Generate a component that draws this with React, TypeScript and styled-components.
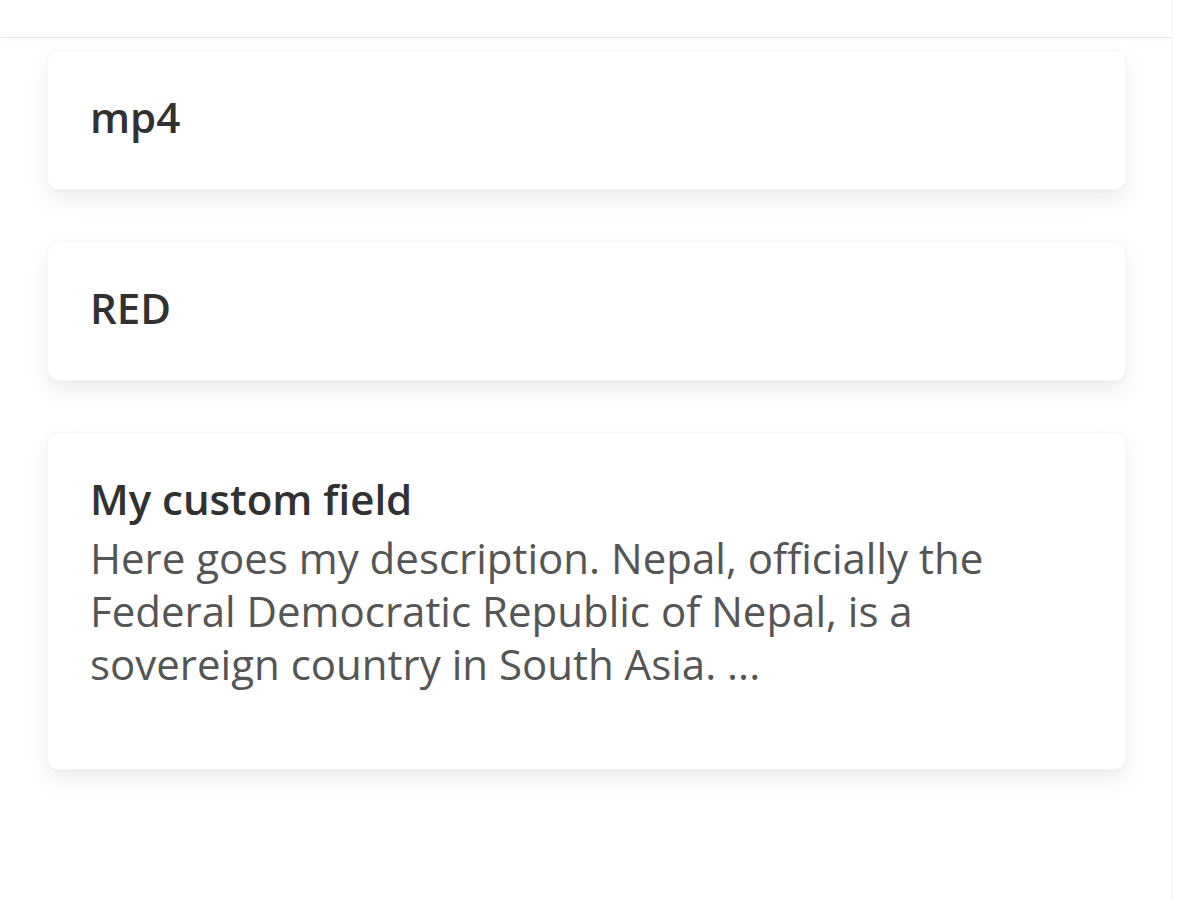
import React from "react";
import styled, { createGlobalStyle } from "styled-components";

const Global = createGlobalStyle`
  html, body { margin: 0; padding: 0; background: #ffffff; }
  body { font-family: "Open Sans", "Noto Sans", sans-serif; }
`;

const Page = styled.div`
  width: 1172px;
  min-height: 900px;
  box-sizing: border-box;
  padding-top: 37px;
  border-right: 1px solid #f5f5f5;
`;

const TopRule = styled.div`
  height: 1px;
  background: #e6e6e6;
  box-shadow: 0 2px 6px rgba(0, 0, 0, 0.05);
`;

const List = styled.div`
  display: flex;
  flex-direction: column;
  gap: 51px;
  padding: 12px 0 0 47px;
  width: 1079px;
`;

const Card = styled.div`
  background: #ffffff;
  border-radius: 11px;
  border: 1px solid #f6f6f6;
  box-shadow: 0 10px 22px rgba(0, 0, 0, 0.075), 0 1px 3px rgba(0, 0, 0, 0.03);
  padding: 39px 42px 46px 42px;
`;

const Title = styled.div`
  font-family: "Open Sans", sans-serif;
  font-weight: 600;
  font-size: 42px;
  line-height: 53px;
  color: #313131;
`;

const Description = styled.p`
  margin: 6px 0 33px 0;
  font-family: "Open Sans", sans-serif;
  font-weight: 400;
  font-size: 42px;
  line-height: 53px;
  color: #555555;
`;

export default function App() {
  return (
    <>
      <Global />
      <Page>
        <TopRule />
        <List>
          <Card>
            <Title>mp4</Title>
          </Card>
          <Card>
            <Title>RED</Title>
          </Card>
          <Card>
            <Title>My custom field</Title>
            <Description>
              Here goes my description. Nepal, officially the Federal Democratic Republic of
              Nepal, is a sovereign country in South Asia. ...
            </Description>
          </Card>
        </List>
      </Page>
    </>
  );
}
